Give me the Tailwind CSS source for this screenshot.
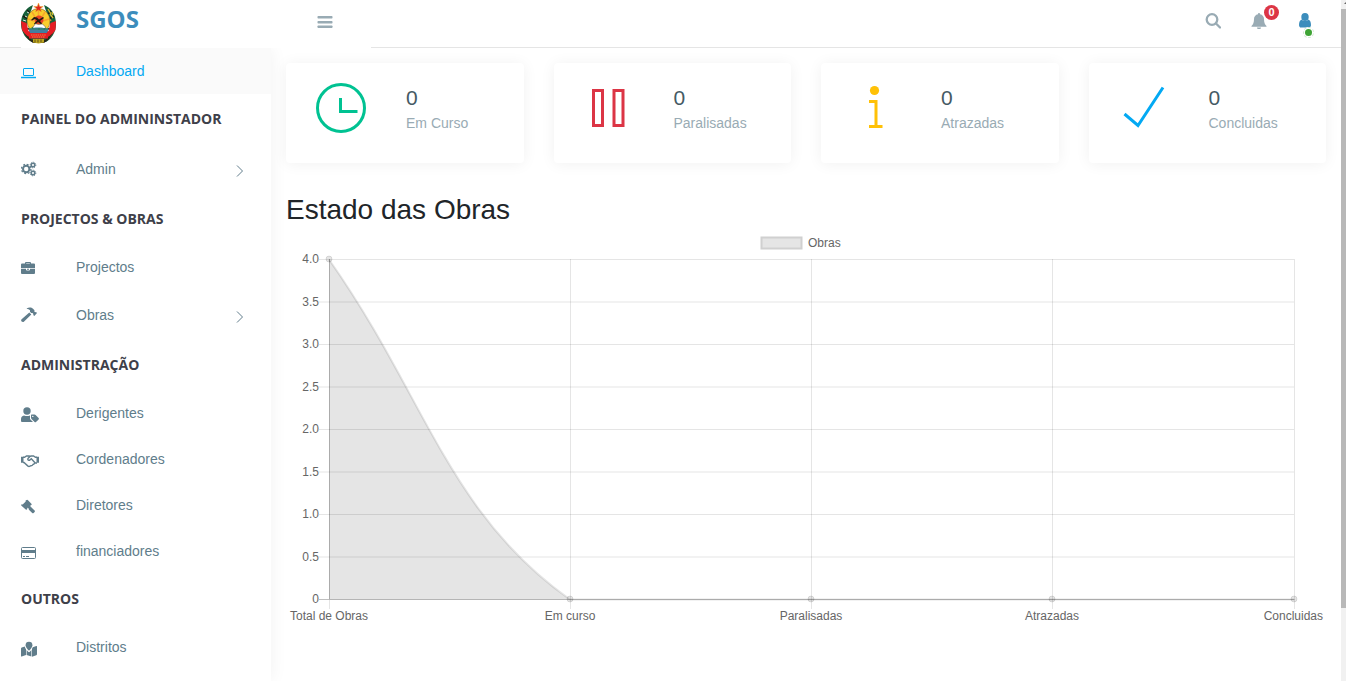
<!DOCTYPE html>
<html lang="pt">
<head>
<meta charset="utf-8">
<meta name="viewport" content="width=device-width, initial-scale=1">
<title>SGOS</title>
<script src="https://cdn.jsdelivr.net/npm/@tailwindcss/browser@4"></script>
</head>
<body class="flex h-screen overflow-hidden bg-white font-['Liberation_Sans',Arial,sans-serif] text-sm text-[#607d8b]">
<div class="flex min-w-0 flex-1 flex-col">
  <header class="relative z-10 flex h-12 shrink-0 items-start bg-white">
    <div class="absolute bottom-0 left-0 h-px w-[21px] bg-[#e5e5e5]"></div>
    <div class="absolute right-0 bottom-0 left-[371px] h-px bg-[#e5e5e5]"></div>
    <a href="#" class="flex w-[271px] items-start pl-[20px]">
      <svg class="mt-[2px] h-[42px] w-[37px]" viewBox="0 0 37 42" aria-hidden="true">
        <path d="M13 3C6 6 1 12 1 22c0 9 6 16 11 18h14c5-3 10-9 10-18 0-10-5-16-12-19l2 6 4 8v14H7V17l4-8z" fill="#17603a"/>
        <path d="M7 8l4 4M3 14l5 3M31 9l-4 4M34 14l-5 3M2 26l7 1M35 26l-7 1" stroke="#171e12" stroke-width="1.500"/>
        <path d="M28 7l3 5M30 12l3 4M29 16l2 3M32 10l1 3" stroke="#d6bb32" stroke-width="1.300"/>
        <path d="M7 10l2 1M5 14l2 1M3 18l3 1" stroke="#dfe8df"/>
        <ellipse cx="18.500" cy="19" rx="11.500" ry="12.500" fill="#f9cd2c" stroke="#57441c" stroke-width=".5"/>
        <path d="M18.500 8v6M12 10l3 5M25 10l-3 5M8 17l6 2M29 17l-6 2" stroke="#f8a52b" stroke-width="1.500"/>
        <circle cx="19" cy="18" r="4.500" fill="#ec4325"/>
        <path d="M11 18l3-3 3 .6 2 2 4-2.500 1 1-4 3 2 2.500-1 .6-3-2.300-3 2.500-1-.8 3-3-2-1.500-3 1.500z" fill="#251a10"/>
        <path d="M13 25l2.500-3.300 3 .8 4-.5 3 3v1.500H13z" fill="#fff" stroke="#444" stroke-width=".5"/>
        <path d="M9 27c4-2 15-2 19 0v5H9z" fill="#3d88b3"/>
        <path d="M9 27h19M12 25l1 2m6-1v2m6-2-1 2" stroke="#2f7952" stroke-width="1.200"/>
        <path d="M1 19l5.500 2 2 8 3 2h14l3-2 2-8 5.500-2-.5 9-5 6.500H7L2 28z" fill="#e51d24"/>
        <path d="M10 28h17v3H10z" fill="#437f9e"/>
        <path d="M4 31l8 7h13l8-7-5 7-4 3H13l-4-3z" fill="#292418"/>
        <path d="M9 31h19v5.500H9z" fill="#e51d24"/>
        <path d="M11 33h15" stroke="#f1a44b" stroke-width=".8" stroke-dasharray="1.500 .7"/><path d="M12 35h13" stroke="#f1a44b" stroke-width=".8" stroke-dasharray="1.500 .7"/>
        <path d="M13 37h11v3.500l-5.500 1-5.500-1z" fill="#bda51f"/><path d="M15 37.500v3m3-3v3m3-3v3" stroke="#382e12" stroke-width=".7"/>
        <path d="M18.500 1l1.200 3.500h3.500l-2.800 2.100 1.100 3.400-3-2-3 2 1.100-3.400-2.800-2.100h3.500z" fill="#df251d" stroke="#edb32d" stroke-width=".5"/>
      </svg>
      <span class="ml-[19px] pt-[3px] font-['Open_Sans',sans-serif] text-2xl leading-8 font-bold text-[#3c8dbc]">SGOS</span>
    </a>
    <button type="button" aria-label="Menu" class="ml-[46px] flex h-11 w-4 items-center">
      <svg class="h-4 w-4" viewBox="0 0 16 16" fill="#99abb4"><rect x=".5" y="2" width="15" height="2.500" rx=".7"/><rect x=".5" y="7" width="15" height="2.500" rx=".7"/><rect x=".5" y="11.500" width="15" height="2.500" rx=".7"/></svg>
    </button>
    <div class="ml-auto flex items-start pt-[13px] pr-[30px]">
      <button type="button" aria-label="Pesquisar" class="mr-[30px]">
        <svg class="h-4 w-4" viewBox="0 0 16 16" fill="none" stroke="#99abb4" stroke-width="2.300"><circle cx="7" cy="6.500" r="5.300"/><path d="M11 10.500l4 4" stroke-linecap="round"/></svg>
      </button>
      <button type="button" aria-label="Notificações: 0" class="relative mr-8">
        <svg class="h-4 w-4" viewBox="0 0 16 16" fill="#99abb4"><path d="M8 0c.7 0 1 .5 1 1.200C11.500 1.700 13 3.600 13 6c0 3.500.8 5.500 2.500 7v.8H.500V13C2.200 11.500 3 9.500 3 6c0-2.400 1.500-4.300 4-4.800C7 .5 7.300 0 8 0zM6 14.400h4A2 1.800 0 016 14.400z"/></svg>
        <span class="absolute -top-2 left-[13px] flex h-[15px] w-[15px] items-center justify-center rounded-full bg-[#dc3545] text-[11px] font-bold text-white">0</span>
      </button>
      <button type="button" aria-label="Utilizador" class="relative">
        <svg class="h-4 w-3" viewBox="0 0 12 16" fill="#3c8dbc"><ellipse cx="6" cy="4" rx="3.700" ry="4"/><path d="M2.700 6.500C4.500 8.600 7.500 8.600 9.300 6.500 11 7 12 9 12 12c0 1.500-.8 2.600-2 2.600H2C.8 14.600 0 13.500 0 12 0 9 1 7 2.700 6.500z"/></svg>
        <span class="absolute top-[14px] left-[4px] flex h-[11px] w-[11px] items-center justify-center rounded-full border border-dashed border-[#d4ead4] bg-white"><span class="h-[7px] w-[7px] shrink-0 rounded-full bg-[#3fa435]"></span></span>
      </button>
    </div>
  </header>

  <div class="flex min-h-0 flex-1">
    <nav class="relative w-[271px] shrink-0 bg-white shadow-[1px_0_16px_rgba(0,0,0,0.05)]">
      <a href="#" class="flex h-[46px] items-center bg-[#fafafa] pl-[21px] text-[#03a9f3]">
        <svg class="mt-[3px] h-4 w-[18px]" viewBox="0 0 18 16" fill="none" stroke="currentColor"><rect x="2.500" y="3.500" width="10" height="7" rx=".5"/><path d="M0 12.500h15" stroke-width="1.500"/></svg><span class="ml-[37px]">Dashboard</span>
      </a>
      <h2 class="flex h-[50px] items-center pl-[21px] font-['Open_Sans',sans-serif] font-bold text-[#3e4049]">PAINEL DO ADMININSTADOR</h2>
      <a href="#" class="flex h-[50px] items-center pr-[27px] pl-[21px]">
        <svg class="h-4 w-[18px]" viewBox="0 0 18 16" fill="none" stroke="currentColor"><circle cx="5.200" cy="8" r="3.200" stroke-width="2"/><circle cx="5.200" cy="8" r="4.700" stroke-width="1.300" stroke-dasharray="1.850 1.840"/><circle cx="12" cy="4" r="1.800" stroke-width="1.500"/><circle cx="12" cy="4" r="2.800" stroke-dasharray="1.100 1.100"/><circle cx="12" cy="12" r="1.800" stroke-width="1.500"/><circle cx="12" cy="12" r="2.800" stroke-dasharray="1.100 1.100"/></svg><span class="ml-[37px]">Admin</span>
        <svg class="mt-[3px] ml-auto h-3 w-2" viewBox="0 0 8 12" fill="none" stroke="currentColor"><path d="M1 .5L6.500 6 1 11.500"/></svg>
      </a>
      <h2 class="flex h-[50px] items-center pl-[21px] font-['Open_Sans',sans-serif] font-bold text-[#3e4049]">PROJECTOS &amp; OBRAS</h2>
      <a href="#" class="flex h-[46px] items-center pl-[21px]">
        <svg class="mt-[2px] h-4 w-[18px]" viewBox="0 0 18 16" fill="currentColor"><path fill-rule="evenodd" d="M4 3.500V3q0-1 1-1h4q1 0 1 1v.5h3q1 0 1 1V8H0V4.500q0-1 1-1zm1.200 0h3.600V3H5.200zM0 8.800h5V9.500q0 1 1 1h2q1 0 1-1v-.7h5V13q0 1-1 1H1q-1 0-1-1zM6 8.700h2v1H6z"/></svg><span class="ml-[37px]">Projectos</span>
      </a>
      <a href="#" class="flex h-[50px] items-center pr-[27px] pl-[21px]">
        <svg class="h-4 w-[18px]" viewBox="0 0 18 16" fill="currentColor"><path d="M5.800 1.500C7.500.2 10.500.2 12 1.700L13.500 3.200 13.300 4.400 14.300 5.200 15 5 16 6 13.300 9 12.200 8 12.400 7 11.500 6.100 10.200 6 9 4.700V3.200C8.200 2.300 7 1.900 5.800 1.900zM8.300 5.400l2 2-7.200 7.100c-1.600 1.500-4-.6-2.500-2.300z"/></svg><span class="ml-[37px]">Obras</span>
        <svg class="mt-[3px] ml-auto h-3 w-2" viewBox="0 0 8 12" fill="none" stroke="currentColor"><path d="M1 .5L6.500 6 1 11.500"/></svg>
      </a>
      <h2 class="flex h-[50px] items-center pl-[21px] font-['Open_Sans',sans-serif] font-bold text-[#3e4049]">ADMINISTRAÇÃO</h2>
      <a href="#" class="flex h-[46px] items-center pl-[21px]">
        <svg class="mt-[3px] h-4 w-[18px]" viewBox="0 0 18 16" fill="currentColor"><circle cx="6" cy="4" r="3.700"/><path d="M3 8.500q3 1 6 0v3.400l3 3H1q-1 0-1-1V12q0-3 3-3.500z"/><path fill-rule="evenodd" d="M10.600 7.500h3q.5 0 1 .5l3 3q.6.700 0 1.400l-2.600 2.600q-.7.600-1.400 0l-3.100-3.100q-.5-.5-.5-1.100V8.200q0-.7.600-.7zM11.800 8.700a.7.7 0 100 1.400.7.700 0 000-1.400z"/></svg><span class="ml-[37px]">Derigentes</span>
      </a>
      <a href="#" class="flex h-[46px] items-center pl-[21px]">
        <svg class="mt-[3px] h-4 w-[18px]" viewBox="0 0 18 16" fill="none" stroke="currentColor" stroke-width="1.400"><path d="M0 3.800h2.500v6H0zM15.500 3.800H18v6h-2.500z" fill="currentColor" stroke="none"/><path d="M2 4.300h1.500L5.500 3h2.700L9 3.400l1-.4h2.500l2 1.300H16M2 9.500h1l4 3.600q1 .7 2 0l1-.4q1.300 0 2-1.200 1 0 1.700-1.500H16M9 3.400L7.200 5.200q-.9 1.500.2 2 1 .5 1.700-.4l1.200-1 3.700 4M9.800 3.200H8"/></svg><span class="ml-[37px]">Cordenadores</span>
      </a>
      <a href="#" class="flex h-[46px] items-center pl-[21px]">
        <svg class="mt-[3px] h-4 w-[18px]" viewBox="0 0 18 16" fill="currentColor"><path d="M6.200.8l.8.500L10.400 4.700l.4.800-.8.800-.7-.1-3.100 3.100.1.800-.8.700-.8-.3L.5 6.700 0 6l.8-.8.900.2 3-3L4.600 1.500z"/><path d="M7.500 7l1.200-1.200 1 1L9.500 8l.8.300 3.300 3.300q.7.700 0 1.400l-1 1q-.7.600-1.400 0L7.900 10.700 7.700 9.800 6.500 8z"/></svg><span class="ml-[37px]">Diretores</span>
      </a>
      <a href="#" class="flex h-[46px] items-center pl-[21px]">
        <svg class="mt-[3px] h-4 w-[18px]" viewBox="0 0 18 16" fill="none" stroke="currentColor"><rect x=".5" y="2.500" width="14" height="11" rx="1"/><path d="M0 6.500h15" stroke-width="3"/><path d="M2 11.500h2m1 0h3"/></svg><span class="ml-[37px]">financiadores</span>
      </a>
      <h2 class="flex h-[50px] items-center pl-[21px] font-['Open_Sans',sans-serif] font-bold text-[#3e4049]">OUTROS</h2>
      <a href="#" class="flex h-[46px] items-center pl-[21px]">
        <svg class="mt-[3px] h-4 w-[18px]" viewBox="0 0 18 16" fill="currentColor"><path d="M8 .8A3.400 3.400 0 0111.400 4.200C11.400 6 9.700 8 8.500 9.300q-.5.400-1 0C6.300 8 4.600 6 4.600 4.200A3.400 3.400 0 018 .8z"/><path d="M0 7.600q0-.7.700-1L3.800 5.500q.3 1.500 1.200 2.800V14L.7 15.500Q0 15.700 0 15zM5.600 9l1.600 1.800q.8.700 1.600 0L10.400 9v6.600l-4.800-1.500zM11 7.700l.8-1.500L15.300 5q.7-.2.700.5v7.800q0 .7-.7 1L11 15.700z"/></svg><span class="ml-[37px]">Distritos</span>
      </a>
    </nav>

    <main class="min-w-0 flex-1 px-[15px] pt-[15px]">
      <section class="grid grid-cols-4 gap-[30px]">
        <div class="flex h-[100px] rounded bg-white pl-[30px] shadow-[0_1px_15px_rgba(0,0,0,0.06)]">
          <svg class="mt-5 h-[50px] w-[50px] shrink-0" viewBox="0 0 50 50" fill="none" stroke="#00c292" stroke-width="3"><circle cx="25" cy="25" r="23.500"/><path d="M24.500 15v13.500h17"/></svg>
          <div class="ml-10 pt-[21px]"><div class="text-[21px] leading-7 text-[#455a64]">0</div><div class="leading-[22px] text-[#99abb4]">Em Curso</div></div>
        </div>
        <div class="flex h-[100px] rounded bg-white pl-[30px] shadow-[0_1px_15px_rgba(0,0,0,0.06)]">
          <svg class="mt-5 h-[50px] w-[50px] shrink-0" viewBox="0 0 50 50" fill="none" stroke="#dc3545" stroke-width="3"><path d="M9.500 7.500h9v35h-9zM30 7.500h9v35h-9z"/></svg>
          <div class="ml-10 pt-[21px]"><div class="text-[21px] leading-7 text-[#455a64]">0</div><div class="leading-[22px] text-[#99abb4]">Paralisadas</div></div>
        </div>
        <div class="flex h-[100px] rounded bg-white pl-[30px] shadow-[0_1px_15px_rgba(0,0,0,0.06)]">
          <svg class="mt-5 h-[50px] w-[50px] shrink-0" viewBox="0 0 50 50" fill="#ffc107"><circle cx="23.500" cy="7.500" r="4.600"/><path d="M18 17h8.500v25H31.500v3H18v-3h5.500V20H18z"/></svg>
          <div class="ml-10 pt-[21px]"><div class="text-[21px] leading-7 text-[#455a64]">0</div><div class="leading-[22px] text-[#99abb4]">Atrazadas</div></div>
        </div>
        <div class="flex h-[100px] rounded bg-white pl-[30px] shadow-[0_1px_15px_rgba(0,0,0,0.06)]">
          <svg class="mt-5 h-[50px] w-[50px] shrink-0" viewBox="0 0 50 50" fill="none" stroke="#03a9f3" stroke-width="3"><path d="M5.500 31l13.500 11.500L44 4.500"/></svg>
          <div class="ml-10 pt-[21px]"><div class="text-[21px] leading-7 text-[#455a64]">0</div><div class="leading-[22px] text-[#99abb4]">Concluidas</div></div>
        </div>
      </section>

      <h1 class="mt-[30px] text-[28px] leading-[34px] text-[#212529]">Estado das Obras</h1>
      <svg class="mt-[3px] block w-full" viewBox="0 0 1040 400" role="img" aria-label="Estado das Obras" font-size="12" fill="#666">
        <rect x="475.500" y="7.500" width="40" height="11" fill="#e5e5e5" stroke="#d0d0d0" stroke-width="2"/>
        <text x="522" y="17">Obras</text>
        <path d="M33 29.500h975M33 72h975M33 114.500h975M33 157h975M33 199.500h975M33 242h975M33 284.500h975M33 327h975M284.500 29v350M525.500 29v350M766.500 29v350M1008.500 29v350" fill="none" stroke="#000" stroke-opacity=".1"/>
        <path d="M43.500 29v340M33 369.500h975.500" fill="none" stroke="#000" stroke-opacity=".25"/>
        <path d="M43.500 370v9" fill="none" stroke="#000" stroke-opacity=".1"/>
        <path d="M43 29.500C139 165.500 162 283.500 284 369.500H43z" fill="#000" fill-opacity=".1"/>
        <path d="M43 29.500C139 165.500 162 283.500 284 369.500H1008" fill="none" stroke="#000" stroke-opacity=".1" stroke-width="2"/>
        <g fill="#000" fill-opacity=".1" stroke="#000" stroke-opacity=".1"><circle cx="43" cy="29" r="3"/><circle cx="284" cy="369" r="3"/><circle cx="525" cy="369" r="3"/><circle cx="766" cy="369" r="3"/><circle cx="1008" cy="369" r="3"/></g>
        <g text-anchor="end"><text x="33" y="33">4.0</text><text x="33" y="76">3.5</text><text x="33" y="118">3.0</text><text x="33" y="161">2.5</text><text x="33" y="203">2.0</text><text x="33" y="246">1.5</text><text x="33" y="288">1.0</text><text x="33" y="331">0.5</text><text x="33" y="373">0</text></g>
        <g text-anchor="middle"><text x="43" y="390">Total de Obras</text><text x="284" y="390">Em curso</text><text x="525" y="390">Paralisadas</text><text x="766" y="390">Atrazadas</text></g><text x="1037" y="390" text-anchor="end">Concluidas</text>
      </svg>
    </main>
  </div>
</div>
<div class="flex w-[5px] shrink-0 flex-col bg-[#f1f1f1]" aria-hidden="true">
  <svg class="h-[9px] w-[5px] shrink-0" viewBox="0 0 5 9"><path d="M3 4l2-2v2z" fill="#666"/></svg>
  <div class="h-[88%] bg-[#b8b8b8]"></div>
</div>
</body>
</html>
